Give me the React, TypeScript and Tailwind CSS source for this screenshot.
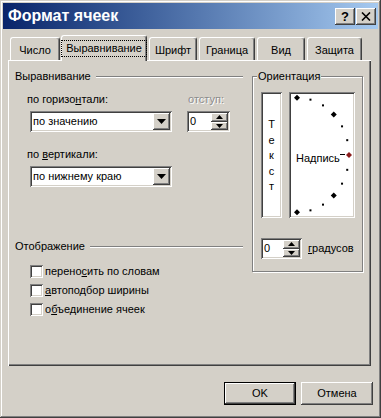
import React from 'react';

const raised =
  'shadow-[inset_-1px_-1px_0_#404040,inset_1px_1px_0_#fff,inset_-2px_-2px_0_#808080,inset_2px_2px_0_#d4d0c8]';
const sunken =
  'shadow-[inset_1px_1px_0_#808080,inset_-1px_-1px_0_#fff,inset_2px_2px_0_#404040,inset_-2px_-2px_0_#d4d0c8]';

const GroupHeader: React.FC<{ label: string }> = ({ label }) => (
  <div className="flex h-[13px] items-center">
    <span>{label}</span>
    <div className="mr-[2px] ml-[5px] h-[2px] flex-1 border-t border-b border-t-[#808080] border-b-white" />
  </div>
);

const Combo: React.FC<{ value: string }> = ({ value }) => (
  <div className={`flex h-[21px] w-[142px] items-center bg-white p-[2px] ${sunken}`}>
    <span className="flex-1 pl-[1px]">{value}</span>
    <div className={`flex h-[17px] w-[17px] items-center justify-center bg-[#d4d0c8] ${raised}`}>
      <svg width="9" height="5" viewBox="0 0 9 5">
        <path d="M0 0h9L4.5 5z" fill="#000" />
      </svg>
    </div>
  </div>
);

const Spin: React.FC<{ className: string }> = ({ className }) => (
  <div className={`flex h-[21px] items-center bg-white p-[2px] ${sunken} ${className}`}>
    <span className="flex-1 pl-[1px]">0</span>
    <div className="flex h-[17px] w-[17px] flex-col">
      <div className={`flex flex-1 items-center justify-center bg-[#d4d0c8] ${raised}`}>
        <svg width="7" height="4" viewBox="0 0 7 4">
          <path d="M0 4h7L3.5 0z" fill="#000" />
        </svg>
      </div>
      <div className={`flex flex-1 items-center justify-center bg-[#d4d0c8] ${raised}`}>
        <svg width="7" height="4" viewBox="0 0 7 4">
          <path d="M0 0h7L3.5 4z" fill="#000" />
        </svg>
      </div>
    </div>
  </div>
);

const Check: React.FC<{ children: React.ReactNode }> = ({ children }) => (
  <div className="flex h-[19px] items-center">
    <div className={`h-[13px] w-[13px] bg-white ${sunken}`} />
    <span className="ml-[2px]">{children}</span>
  </div>
);

const Tab: React.FC<{ label: string; width: string; active?: boolean }> = ({ label, width, active }) =>
  active ? (
    <div
      className={`relative z-10 -mb-px flex h-[26px] items-center justify-center rounded-t-[3px] border-t border-r border-l border-t-white border-r-[#404040] border-l-white bg-[#d4d0c8] shadow-[inset_-1px_0_0_#808080] ${width}`}
    >
      <span className="border border-dotted border-black px-[4px] py-[1px]">{label}</span>
    </div>
  ) : (
    <div
      className={`flex h-[23px] items-center justify-center rounded-t-[3px] border-t border-r border-l border-t-white border-r-[#404040] border-l-white bg-[#d4d0c8] pt-[2px] shadow-[inset_-1px_0_0_#808080] ${width}`}
    >
      {label}
    </div>
  );

const Dial: React.FC = () => {
  const dots = [];
  for (let a = -90; a <= 90; a += 15) {
    const r = (a * Math.PI) / 180;
    const x = 8 + 52 * Math.cos(r);
    const y = 63 - 57.3 * Math.sin(r);
    if (a === 0) {
      dots.push(<path key={a} d={`M${x} ${y - 3}l3 3-3 3-3-3z`} fill="#8b1c1c" />);
    } else if (a % 45 === 0) {
      dots.push(<path key={a} d={`M${x} ${y - 3}l3 3-3 3-3-3z`} fill="#000" />);
    } else {
      dots.push(<rect key={a} x={x - 1} y={y - 1} width="2" height="2" fill="#000" />);
    }
  }
  return (
    <div className={`relative flex h-[126px] w-[66px] items-center bg-white ${sunken}`}>
      <span className="pt-[6px] pl-[7px]">Надпись</span>
      <svg className="absolute inset-0" width="66" height="126" viewBox="0 0 66 126">
        {dots}
        <path d="M51 62.5h5" stroke="#000" strokeWidth="1" />
      </svg>
    </div>
  );
};

export default function App() {
  return (
    <div className="h-[418px] w-[381px] bg-[#d4d0c8] p-[3px] font-['Liberation_Sans',Arial,sans-serif] text-[11px] leading-[13px] text-black shadow-[inset_-1px_-1px_0_#404040,inset_1px_1px_0_#d4d0c8,inset_-2px_-2px_0_#808080,inset_2px_2px_0_#fff]">
      <div className="flex h-[26px] items-center bg-linear-to-r from-[#0a246a] to-[#a6caf0] pr-[2px] pl-[5px]">
        <span className="flex-1 text-[16px] leading-[20px] font-bold text-white">Формат ячеек</span>
        <div className={`flex h-[17px] w-[20px] items-center justify-center bg-[#d4d0c8] text-[13px] font-bold ${raised}`}>
          ?
        </div>
        <div className={`ml-px flex h-[17px] w-[20px] items-center justify-center bg-[#d4d0c8] ${raised}`}>
          <svg width="10" height="9" viewBox="0 0 10 9">
            <path d="M1 0.5l8 8M9 0.5l-8 8" stroke="#000" strokeWidth="1.6" />
          </svg>
        </div>
      </div>

      <div className="flex h-[25px] items-end pt-0 pl-[7px] mt-[6px]">
        <Tab label="Число" width="w-[50px]" />
        <div className="ml-px">
          <Tab label="Выравнивание" width="w-[86px]" active />
        </div>
        <div className="ml-[2px]">
          <Tab label="Шрифт" width="w-[48px]" />
        </div>
        <div className="ml-[2px]">
          <Tab label="Граница" width="w-[56px]" />
        </div>
        <div className="ml-[2px]">
          <Tab label="Вид" width="w-[48px]" />
        </div>
        <div className="ml-[2px]">
          <Tab label="Защита" width="w-[55px]" />
        </div>
      </div>

      <div className="ml-[5px] flex h-[306px] w-[363px] gap-[7px] pt-[10px] pr-[8px] pl-[7px] shadow-[inset_1px_1px_0_#fff,inset_-1px_-1px_0_#404040,inset_-2px_-2px_0_#808080]">
        <div className="flex w-[230px] flex-col">
          <GroupHeader label="Выравнивание" />
          <div className="mt-[10px] flex pl-[12px]">
            <div className="w-[160px]">
              <div>
                по горизо<u>н</u>тали:
              </div>
              <div className="mt-[5px] ml-[3px]">
                <Combo value="по значению" />
              </div>
            </div>
            <div>
              <div className="ml-px text-[#8c8c8c] [text-shadow:1px_1px_0_#fff]">отступ:</div>
              <div className="mt-[5px]">
                <Spin className="w-[43px]" />
              </div>
            </div>
          </div>
          <div className="mt-[16px] pl-[12px]">
            по <u>в</u>ертикали:
          </div>
          <div className="mt-[5px] pl-[15px]">
            <Combo value="по нижнему краю" />
          </div>
          <div className="mt-[53px]">
            <GroupHeader label="Отображение" />
          </div>
          <div className="mt-[9px] flex flex-col pl-[15px]">
            <Check>
              перено<u>с</u>ить по словам
            </Check>
            <Check>
              <u>а</u>втоподбор ширины
            </Check>
            <Check>
              о<u>б</u>ъединение ячеек
            </Check>
          </div>
        </div>

        <div className="mt-[6px] flex h-[196px] w-[111px] flex-col border border-[#808080] shadow-[inset_1px_1px_0_#fff,1px_1px_0_#fff]">
          <span className="-mt-[7px] ml-[4px] self-start bg-[#d4d0c8] px-px">Ориентация</span>
          <div className="mt-[9px] ml-[8px] flex gap-[7px]">
            <div className={`flex h-[126px] w-[21px] flex-col items-center justify-center bg-white pt-[2px] leading-[15.5px] ${sunken}`}>
              <span>Т</span>
              <span>е</span>
              <span>к</span>
              <span>с</span>
              <span>т</span>
            </div>
            <Dial />
          </div>
          <div className="mt-[20px] ml-[8px] flex items-center">
            <Spin className="w-[41px]" />
            <span className="ml-[6px]">
              <u>г</u>радусов
            </span>
          </div>
        </div>
      </div>

      <div className="mt-[16px] flex justify-end gap-[5px] pr-[5px]">
        <div className="h-[23px] w-[72px] border border-black">
          <div className={`flex h-full w-full items-center justify-center ${raised}`}>OK</div>
        </div>
        <div className={`flex h-[23px] w-[72px] items-center justify-center ${raised}`}>Отмена</div>
      </div>
    </div>
  );
}
